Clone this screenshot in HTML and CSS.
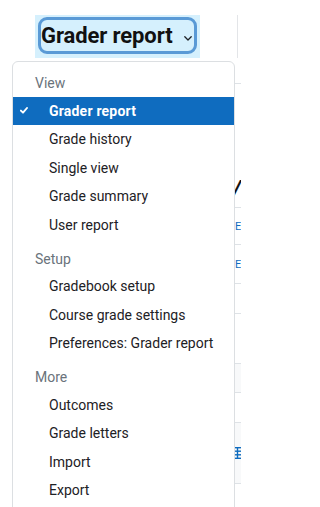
FILE: index.html
```html
<!DOCTYPE html>
<html lang="en">
<head>
<meta charset="utf-8">
<title>Grader report</title>
<link rel="stylesheet" href="styles.css">
</head>
<body>
<div class="page">
  <header class="top">
    <div class="sel-wrap">
      <div class="sel-btn">
        <span class="sel-text">Grader report</span>
        <svg class="chev" width="8" height="5" viewBox="0 0 8 5" aria-hidden="true"><polyline points="0.8,0.8 4,4 7.2,0.8" fill="none" stroke="#1d2125" stroke-width="1.3" stroke-linecap="round" stroke-linejoin="round"/></svg>
      </div>
    </div>
    <div class="vsep"></div>
  </header>
  <section class="report">
    <div class="heading"><span class="h-text">/</span></div>
    <div class="row r1"><span class="link">E</span></div>
    <div class="row r2"><span class="link">E</span></div>
    <div class="row r3"></div>
    <div class="row r4"></div>
    <div class="row r5 band"></div>
    <div class="row r6"></div>
    <div class="row r7 band">
      <svg class="grid-ico" width="8" height="12" viewBox="0 0 8 12" aria-hidden="true"><g fill="none" stroke="#0f6cbf" stroke-width="1.4"><rect x="0.7" y="0.7" width="8" height="10.6"/><line x1="0.7" y1="4.2" x2="8" y2="4.2"/><line x1="0.7" y1="7.8" x2="8" y2="7.8"/><line x1="4.5" y1="0.7" x2="4.5" y2="11.3"/></g></svg>
    </div>
  </section>
</div>

<nav class="menu" role="menu">
  <div class="group">
    <div class="m-head">View</div>
    <div class="m-item active"><span class="ico"><svg width="8" height="7" viewBox="0 0 8 7" aria-hidden="true"><polyline points="0.9,3.6 3,5.7 7,1" fill="none" stroke="#fff" stroke-width="1.9" stroke-linecap="round" stroke-linejoin="round"/></svg></span><span>Grader report</span></div>
    <div class="m-item"><span class="ico"></span><span>Grade history</span></div>
    <div class="m-item"><span class="ico"></span><span>Single view</span></div>
    <div class="m-item"><span class="ico"></span><span>Grade summary</span></div>
    <div class="m-item"><span class="ico"></span><span>User report</span></div>
  </div>
  <div class="group">
    <div class="m-head">Setup</div>
    <div class="m-item"><span class="ico"></span><span>Gradebook setup</span></div>
    <div class="m-item"><span class="ico"></span><span>Course grade settings</span></div>
    <div class="m-item"><span class="ico"></span><span>Preferences: Grader report</span></div>
  </div>
  <div class="group">
    <div class="m-head">More</div>
    <div class="m-item"><span class="ico"></span><span>Outcomes</span></div>
    <div class="m-item"><span class="ico"></span><span>Grade letters</span></div>
    <div class="m-item"><span class="ico"></span><span>Import</span></div>
    <div class="m-item"><span class="ico"></span><span>Export</span></div>
  </div>
</nav>
</body>
</html>
```
FILE: styles.css
```css
* { box-sizing: border-box; }
html, body { margin: 0; padding: 0; overflow: hidden; }
body {
  width: 241px;
  height: 507px;
  position: relative;
  background: #fff;
  font-family: Roboto, "Noto Sans", Arial, sans-serif;
  color: #1d2125;
}
.page {
  width: 241px;
  height: 507px;
  overflow: hidden;
}

.top {
  display: flex;
  align-items: flex-start;
  height: 58px;
  padding: 15px 0 0 35px;
}
.sel-wrap {
  width: 165px;
  height: 43px;
  padding: 2px 3px 4px 3px;
  background: #d5f0fd;
}
.sel-btn {
  height: 100%;
  display: flex;
  align-items: center;
  padding: 1px 2px 0 0;
  border: 3px solid #5a9ad6;
  border-radius: 9px;
}
.sel-text {
  font-size: 22px;
  font-weight: 700;
  line-height: 26px;
  color: #111;
  letter-spacing: -0.1px;
}
.chev { margin-left: auto; margin-top: 4px; }
.vsep {
  width: 1px;
  height: 43px;
  margin-left: 37px;
  background: #e3e5e8;
}

.report {
  width: 217px;
  margin-top: 25px;
  margin-left: 24px;
  border-top: 1px solid #dee2e6;
}
.heading {
  height: 124px;
  padding: 92px 0 0 209px;
  border-bottom: 1px solid #dee2e6;
  white-space: nowrap;
}
.h-text {
  font-size: 22px;
  font-weight: 700;
  font-style: italic;
  line-height: 26px;
  color: #111;
}
.row {
  display: flex;
  align-items: center;
  padding-left: 211px;
  border-bottom: 1px solid #dee2e6;
  white-space: nowrap;
}
.link { color: #0f6cbf; font-size: 11px; }
.r1 { height: 37px; }
.r2 { height: 39px; }
.r3 { height: 30px; }
.r4 { height: 50px; }
.r5 { height: 29px; }
.r6 { height: 30px; }
.r7 { height: 61px; padding-left: 209px; }
.band { background: #f8f9fa; }

.menu {
  position: absolute;
  left: 12px;
  top: 61px;
  width: 223px;
  height: 460px;
  padding: 8px 0;
  background: #fff;
  border: 1px solid #dcdfe2;
  border-radius: 6px;
}
.group + .group { margin-top: 6.5px; }
.m-head {
  height: 26.5px;
  line-height: 26.5px;
  padding-left: 22px;
  font-size: 14px;
  color: #6a737b;
}
.m-item {
  display: flex;
  align-items: center;
  height: 28.5px;
  padding-left: 7px;
  font-size: 14px;
  color: #1d2125;
  white-space: nowrap;
}
.m-item .ico {
  flex: none;
  width: 29px;
  display: flex;
  align-items: center;
}
.m-item.active {
  background: #0f6cbf;
  color: #fff;
  font-weight: 700;
  letter-spacing: 0.2px;
}
```
